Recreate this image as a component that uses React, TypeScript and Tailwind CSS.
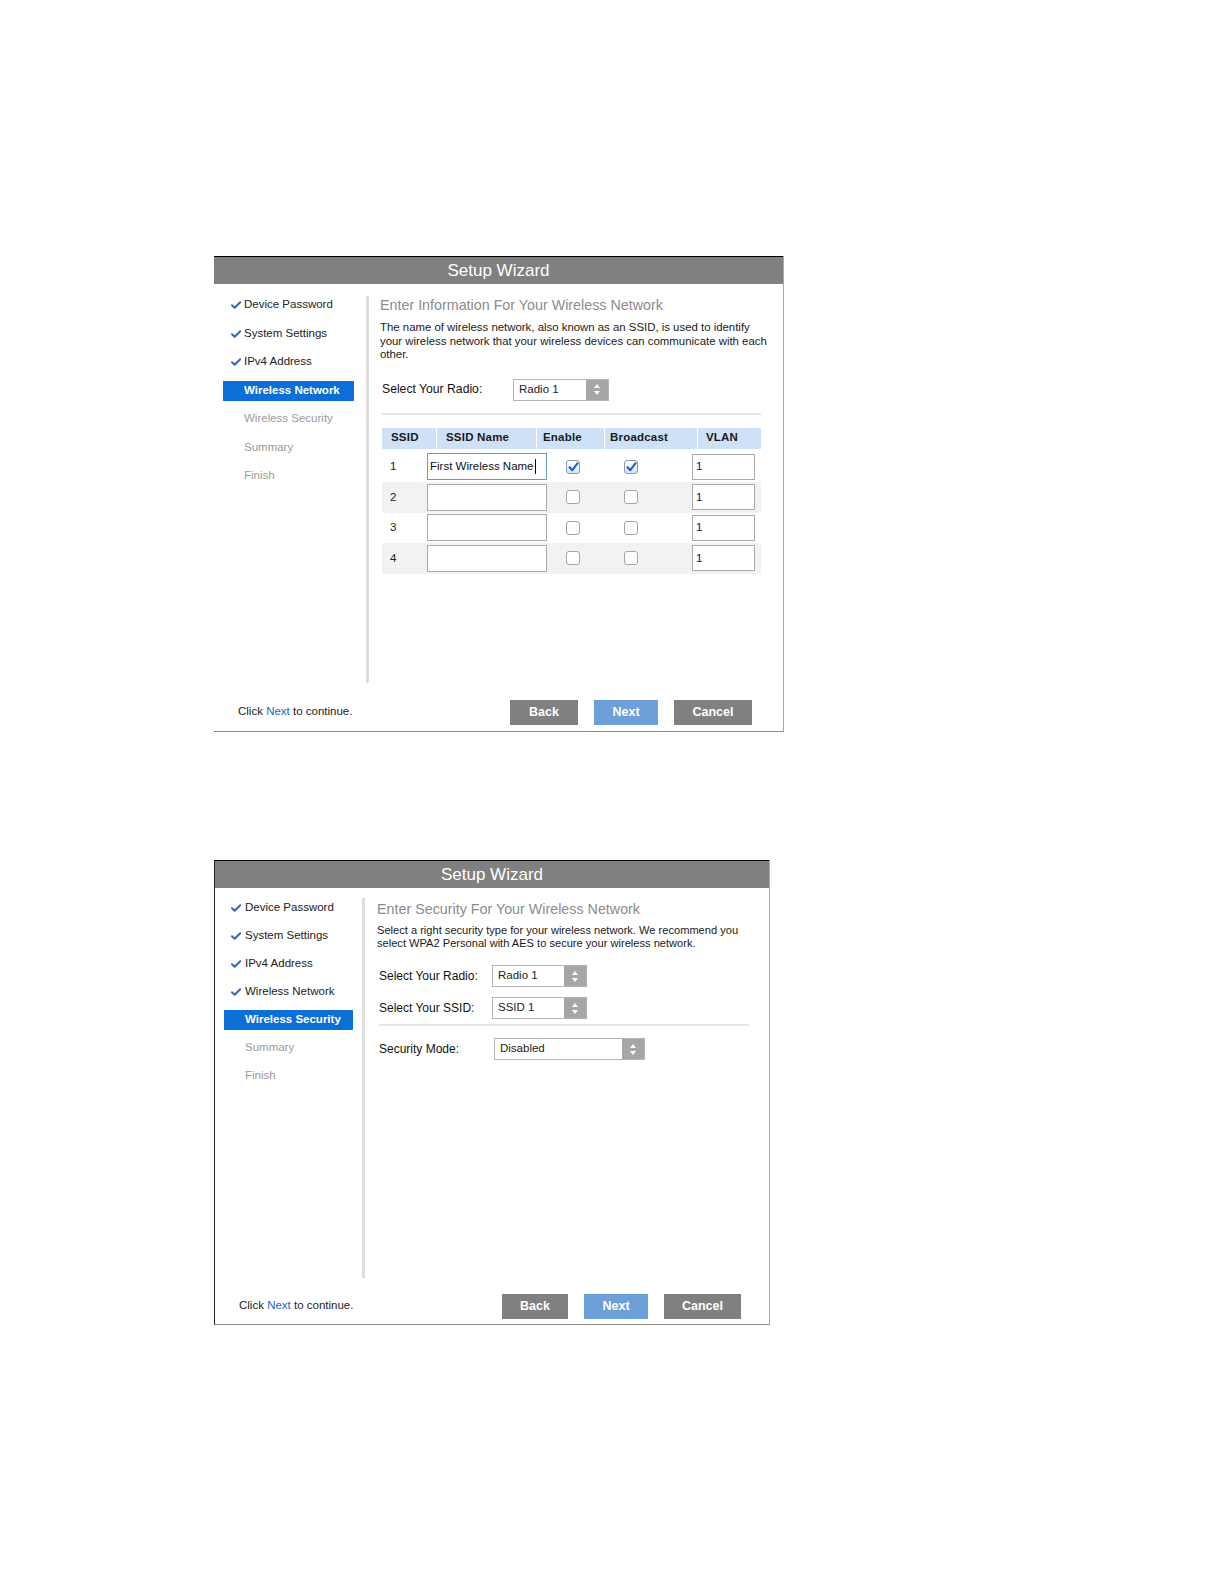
import React from "react";

const STEPS = [
  "Device Password",
  "System Settings",
  "IPv4 Address",
  "Wireless Network",
  "Wireless Security",
  "Summary",
  "Finish",
];

function Tick() {
  return (
    <svg width="10" height="8" viewBox="0 0 10 8">
      <path d="M1 4.3 L3.7 6.8 L9.2 1.2" stroke="#2b68c2" strokeWidth="2" fill="none" strokeLinecap="round" strokeLinejoin="round" />
    </svg>
  );
}

function Arrows() {
  return (
    <svg width="8" height="13" viewBox="0 0 8 13">
      <polygon points="4,1 7,5 1,5" fill="#ffffff" />
      <polygon points="1,8 7,8 4,12" fill="#ffffff" />
    </svg>
  );
}

function Select({ text, w }: { text: string; w: string }) {
  return (
    <div className={`flex h-[22px] ${w} border border-[#b5b5b5] bg-white`}>
      <div className="flex flex-1 items-center pl-[5px] text-[11.5px] text-[#222]">{text}</div>
      <div className="flex w-[22px] items-center justify-center bg-[#a6a6a6]">
        <Arrows />
      </div>
    </div>
  );
}

function Sidebar({
  active,
  pad,
  boxW,
  gap,
  checkLeft,
}: {
  active: number;
  pad: string;
  boxW: string;
  gap: string;
  checkLeft: string;
}) {
  return (
    <div className={`flex flex-col ${pad} ${gap}`}>
      {STEPS.map((s, i) => {
        const isActive = i === active;
        const done = i < active;
        return (
          <div
            key={s}
            className={`relative flex h-[20px] items-center pl-[21px] ${boxW} ${
              isActive
                ? "bg-[#0b6fd6] text-[11.5px] font-bold text-white"
                : done
                ? "text-[11.5px] text-[#222]"
                : "text-[11.5px] text-[#9a9a9a]"
            }`}
          >
            {done && (
              <span className={`absolute ${checkLeft} top-[6px] flex`}>
                <Tick />
              </span>
            )}
            {s}
          </div>
        );
      })}
    </div>
  );
}

function Header() {
  return (
    <div className="flex h-[28px] items-center justify-center border-t border-black bg-[#808080] text-[17px] text-white">
      Setup Wizard
    </div>
  );
}

function Footer({
  pad,
  gaps,
  widths,
}: {
  pad: string;
  gaps: string;
  widths: [string, string, string];
}) {
  return (
    <div className={`flex items-start justify-between ${pad}`}>
      <div className="mt-[3px] text-[11.5px] text-[#222]">
        Click <span className="text-[#1565c8]">Next</span> to continue.
      </div>
      <div className={`flex ${gaps}`}>
        <div className={`flex h-[25px] ${widths[0]} items-center justify-center bg-[#808080] text-[12.5px] font-bold text-white`}>
          Back
        </div>
        <div className={`flex h-[25px] ${widths[1]} items-center justify-center bg-[#6d9fd8] text-[12.5px] font-bold text-white`}>
          Next
        </div>
        <div className={`flex h-[25px] ${widths[2]} items-center justify-center bg-[#808080] text-[12.5px] font-bold text-white`}>
          Cancel
        </div>
      </div>
    </div>
  );
}

function Checkbox({ checked }: { checked?: boolean }) {
  return (
    <div
      className={`flex h-[14px] w-[14px] items-center justify-center rounded-[3px] border ${
        checked ? "border-[#8a9bb0] bg-gradient-to-b from-white to-[#d9e3ef]" : "border-[#a5a5a5] bg-white"
      }`}
    >
      {checked && (
        <svg width="11" height="10" viewBox="0 0 11 10">
          <path d="M1.5 5.2 L4.3 8.2 L9.6 1.2" stroke="#1a5fd1" strokeWidth="2" fill="none" strokeLinecap="round" strokeLinejoin="round" />
        </svg>
      )}
    </div>
  );
}

function Row({ n, name, shaded }: { n: number; name?: string; shaded: boolean }) {
  return (
    <div className={`flex h-[30.5px] items-center ${shaded ? "bg-[#f2f2f2]" : "bg-white"}`}>
      <div className="w-[45px] pl-[8px] text-[11.5px] text-[#222]">{n}</div>
      <div
        className={`flex h-[27px] w-[120px] items-center bg-white pl-[2px] text-[11.5px] text-[#111] ${
          name ? "border-[1.5px] border-[#6a97d0]" : "border border-[#aaaaaa]"
        }`}
      >
        {name}
        {name && <span className="ml-[1px] inline-block h-[15px] w-[1px] bg-black" />}
      </div>
      <div className="ml-[19px]">
        <Checkbox checked={!!name} />
      </div>
      <div className="ml-[44px]">
        <Checkbox checked={!!name} />
      </div>
      <div className="ml-[54px] flex h-[26px] w-[63px] items-center border border-[#aaaaaa] bg-white pl-[3px] text-[11.5px] text-[#111]">
        1
      </div>
    </div>
  );
}

function WirelessNetworkWizard() {
  return (
    <div className="flex w-[570px] flex-col border-b border-r border-b-[#8a8a8a] border-r-[#a8a8a8]">
      <Header />
      <div className="flex h-[399px] pt-[11px]">
        <div className="w-[152px]">
          <Sidebar active={3} pad="pl-[9px]" boxW="w-[131px]" gap="gap-[8.5px]" checkLeft="left-[8px]" />
        </div>
        <div className="mt-[1px] h-[387px] w-[3px] bg-[#dedede]" />
        <div className="flex flex-col pl-[11px] pt-[1px]">
          <div className="text-[14.3px] leading-[18px] text-[#8c8c8c]">
            Enter Information For Your Wireless Network
          </div>
          <div className="mt-[7px] whitespace-nowrap text-[11.4px] leading-[13.5px] text-[#1a1a1a]">
            The name of wireless network, also known as an SSID, is used to identify
            <br />
            your wireless network that your wireless devices can communicate with each
            <br />
            other.
          </div>
          <div className="ml-[2px] mt-[17px] flex items-center">
            <div className="w-[131px] text-[12.2px] text-[#111]">Select Your Radio:</div>
            <Select text="Radio 1" w="w-[96px]" />
          </div>
          <div className="ml-[2px] mt-[12px] h-[2px] w-[379px] bg-[#e6e6e6]" />
          <div className="ml-[2px] mt-[13px] w-[379px]">
            <div className="flex h-[21px] items-center gap-[1px] text-[11.5px] font-bold tracking-[0.2px] text-[#1a1a1a]">
              <div className="flex h-full w-[54px] items-center bg-[#cfe1f6] pl-[9px]">SSID</div>
              <div className="flex h-full w-[99px] items-center bg-[#cfe1f6] pl-[9px]">SSID Name</div>
              <div className="flex h-full w-[67px] items-center bg-[#cfe1f6] pl-[6px]">Enable</div>
              <div className="flex h-full w-[92px] items-center bg-[#cfe1f6] pl-[5px]">Broadcast</div>
              <div className="flex h-full flex-1 items-center bg-[#cfe1f6] pl-[8px]">VLAN</div>
            </div>
            <div className="h-[3px]" />
            <Row n={1} name="First Wireless Name" shaded={false} />
            <Row n={2} shaded />
            <Row n={3} shaded={false} />
            <Row n={4} shaded />
          </div>
        </div>
      </div>
      <Footer
        pad="pl-[24px] pr-[31px] pt-[17px] pb-[6px]"
        gaps="gap-[16px]"
        widths={["w-[68px]", "w-[64px]", "w-[78px]"]}
      />
    </div>
  );
}

function WirelessSecurityWizard() {
  return (
    <div className="flex w-[556px] flex-col border-b border-l border-r border-b-[#8a8a8a] border-l-[#222] border-r-[#a8a8a8]">
      <Header />
      <div className="flex h-[390px] pt-[10px]">
        <div className="w-[147px]">
          <Sidebar active={4} pad="pl-[9px]" boxW="w-[129px]" gap="gap-[8px]" checkLeft="left-[7px]" />
        </div>
        <div className="h-[380px] w-[3px] bg-[#dedede]" />
        <div className="flex flex-col pl-[12px] pt-[2px]">
          <div className="text-[14.3px] leading-[18px] text-[#8c8c8c]">
            Enter Security For Your Wireless Network
          </div>
          <div className="mt-[6px] whitespace-nowrap text-[11.1px] leading-[13px] text-[#1a1a1a]">
            Select a right security type for your wireless network. We recommend you
            <br />
            select WPA2 Personal with AES to secure your wireless network.
          </div>
          <div className="ml-[2px] mt-[15px] flex items-center">
            <div className="w-[113px] text-[12px] text-[#111]">Select Your Radio:</div>
            <Select text="Radio 1" w="w-[95px]" />
          </div>
          <div className="ml-[2px] mt-[10px] flex items-center">
            <div className="w-[113px] text-[12px] text-[#111]">Select Your SSID:</div>
            <Select text="SSID 1" w="w-[95px]" />
          </div>
          <div className="ml-[2px] mt-[5px] h-[2px] w-[370px] bg-[#e6e6e6]" />
          <div className="ml-[2px] mt-[12px] flex items-center">
            <div className="w-[115px] text-[12px] text-[#111]">Security Mode:</div>
            <Select text="Disabled" w="w-[151px]" />
          </div>
        </div>
      </div>
      <Footer
        pad="pl-[24px] pr-[28px] pt-[16px] pb-[5px]"
        gaps="gap-[16px]"
        widths={["w-[66px]", "w-[64px]", "w-[77px]"]}
      />
    </div>
  );
}

export default function App() {
  return (
    <div className="h-[1584px] w-[1224px] bg-white pl-[214px] pt-[256px] font-['Liberation_Sans',Arial,sans-serif]">
      <WirelessNetworkWizard />
      <div className="mt-[128px]">
        <WirelessSecurityWizard />
      </div>
    </div>
  );
}
